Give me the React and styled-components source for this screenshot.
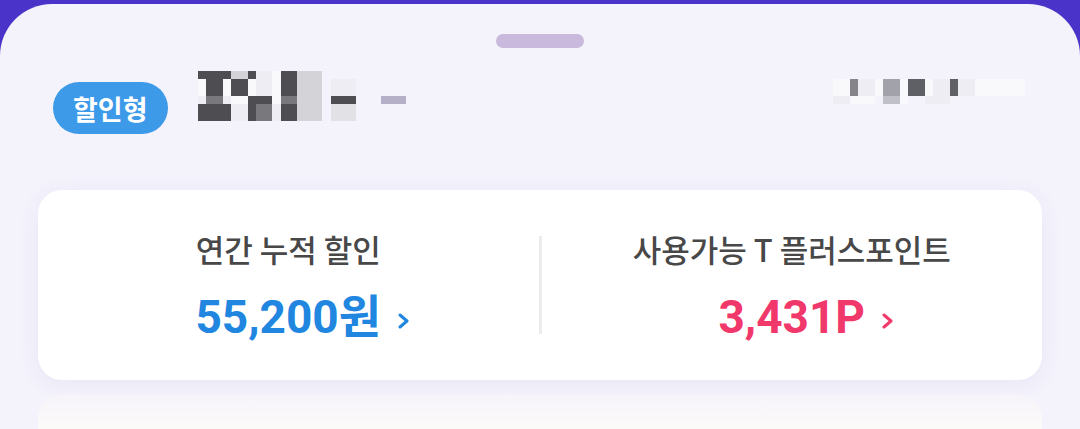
import React from 'react'
import styled, { createGlobalStyle } from 'styled-components'

const GlobalStyle = createGlobalStyle`
  html, body {
    margin: 0;
    padding: 0;
    background: #4a33c9;
    font-family: Roboto, "Noto Sans CJK KR", sans-serif;
  }
`

const Sheet = styled.div`
  margin-top: 4px;
  height: 425px;
  overflow: hidden;
  background: #f4f3fc;
  border-radius: 52px 52px 0 0;
  display: flex;
  flex-direction: column;
  align-items: center;
  padding-top: 30px;
  box-sizing: border-box;
`
const Handle = styled.div`
  width: 88px;
  height: 14px;
  flex-shrink: 0;
  border-radius: 7px;
  background: #c8b9dd;
`
const Header = styled.div`
  align-self: stretch;
  display: flex;
  flex-shrink: 0;
  align-items: flex-start;
  justify-content: space-between;
  margin-top: 23px;
  padding: 0 47px 0 53px;
`
const Left = styled.div`
  display: flex;
  align-items: flex-start;
  gap: 30px;
`
const Badge = styled.span`
  margin-top: 11px;
  height: 52px;
  padding: 0 20px;
  border-radius: 26px;
  background: #3d9ae8;
  color: #fff;
  font-family: "Noto Sans CJK KR", sans-serif;
  font-size: 27px;
  font-weight: 700;
  display: flex;
  align-items: center;
`
const Mosaic = styled.div`
  display: grid;
  grid-template-columns: repeat(${p => p.cols}, 8.33px);
  grid-auto-rows: 8.33px;
  margin-top: ${p => p.top || 0}px;
`
const Cell = styled.i`
  background: ${p => p.c};
`
const Card = styled.div`
  align-self: stretch;
  flex-shrink: 0;
  margin: 56px 38px 0;
  height: 190px;
  background: #fff;
  border-radius: 24px;
  box-shadow: 0 4px 22px rgba(70, 50, 140, 0.07);
  display: grid;
  grid-template-columns: 1fr 3px 1fr;
  align-items: start;
  padding-top: 41px;
  box-sizing: border-box;
`
const Divider = styled.div`
  height: 98px;
  margin-top: 5px;
  background: #ececee;
`
const Stat = styled.div`
  display: flex;
  flex-direction: column;
  align-items: stretch;
`
const Label = styled.div`
  text-align: center;
  font-family: "Noto Sans CJK KR", sans-serif;
  font-size: 31px;
  line-height: 36px;
  font-weight: 500;
  color: #484849;
`
const ValueRow = styled.div`
  display: grid;
  grid-template-columns: 1fr auto 1fr;
  align-items: center;
  margin-top: 23px;
`
const Value = styled.div`
  grid-column: 2;
  font-family: Roboto, "Noto Sans CJK KR", sans-serif;
  font-size: 46px;
  line-height: 54px;
  font-weight: 700;
  color: ${p => p.color};
`
const Chevron = styled.svg`
  grid-column: 3;
  justify-self: start;
  margin: 7px 0 0 16px;
`
const NextCard = styled.div`
  align-self: stretch;
  flex-shrink: 0;
  margin: 14px 38px 0;
  height: 80px;
  background: linear-gradient(#f6f4fa, #fcf9f9 30px);
  border-radius: 24px;
`

const palette = {
  D: '#4d4d52', G: '#78787d', L: '#d3d3d8', E: '#e1e1e6', F: '#ededf3',
  W: '#f9f9fc', M: '#a2a2aa', K: '#5f5f66', H: '#848489', S: '#c0c0c8',
  P: '#b5b0c8', '.': 'transparent'
}

const nameRows = [
  'DDDDLLDFFWDDLLL..........',
  'WDDWDDWFFWDDLLL.FFF......',
  'WDDWDDWFFWDDLLL.FFF......',
  'FGGFWWDDDWGGLLL.DDD...PPP',
  'DDDDFFDGGFDDLLL.EEE......',
  'DDDDFFDGGFDDLLL.EEE......'
]
const codeRows = [
  'WWHFFWMMWKKWFFKFFWWWWWW.',
  'WWHFFWMMWKKWFFKFFWWWWWW.',
  'FFWWW.SSW..FFF..........'
]

const Pixels = ({ rows, top }) => (
  <Mosaic cols={rows[0].length} top={top}>
    {rows.flatMap((r, y) => r.split('').map((ch, x) => <Cell key={y + '-' + x} c={palette[ch]} />))}
  </Mosaic>
)

const Arrow = ({ color }) => (
  <Chevron width="13" height="16" viewBox="0 0 13 16">
    <polyline points="3,2 10,8 3,14" fill="none" stroke={color} strokeWidth="3" strokeLinecap="round" strokeLinejoin="round" />
  </Chevron>
)

const StatBlock = ({ label, value, color }) => (
  <Stat>
    <Label>{label}</Label>
    <ValueRow>
      <Value color={color}>{value}</Value>
      <Arrow color={color} />
    </ValueRow>
  </Stat>
)

export default function App() {
  return (
    <>
      <GlobalStyle />
      <Sheet>
        <Handle />
        <Header>
          <Left>
            <Badge>할인형</Badge>
            <Pixels rows={nameRows} />
          </Left>
          <Pixels rows={codeRows} top={8} />
        </Header>
        <Card>
          <StatBlock label="연간 누적 할인" value="55,200원" color="#2086df" />
          <Divider />
          <StatBlock label="사용가능 T 플러스포인트" value="3,431P" color="#f1386b" />
        </Card>
        <NextCard />
      </Sheet>
    </>
  )
}
